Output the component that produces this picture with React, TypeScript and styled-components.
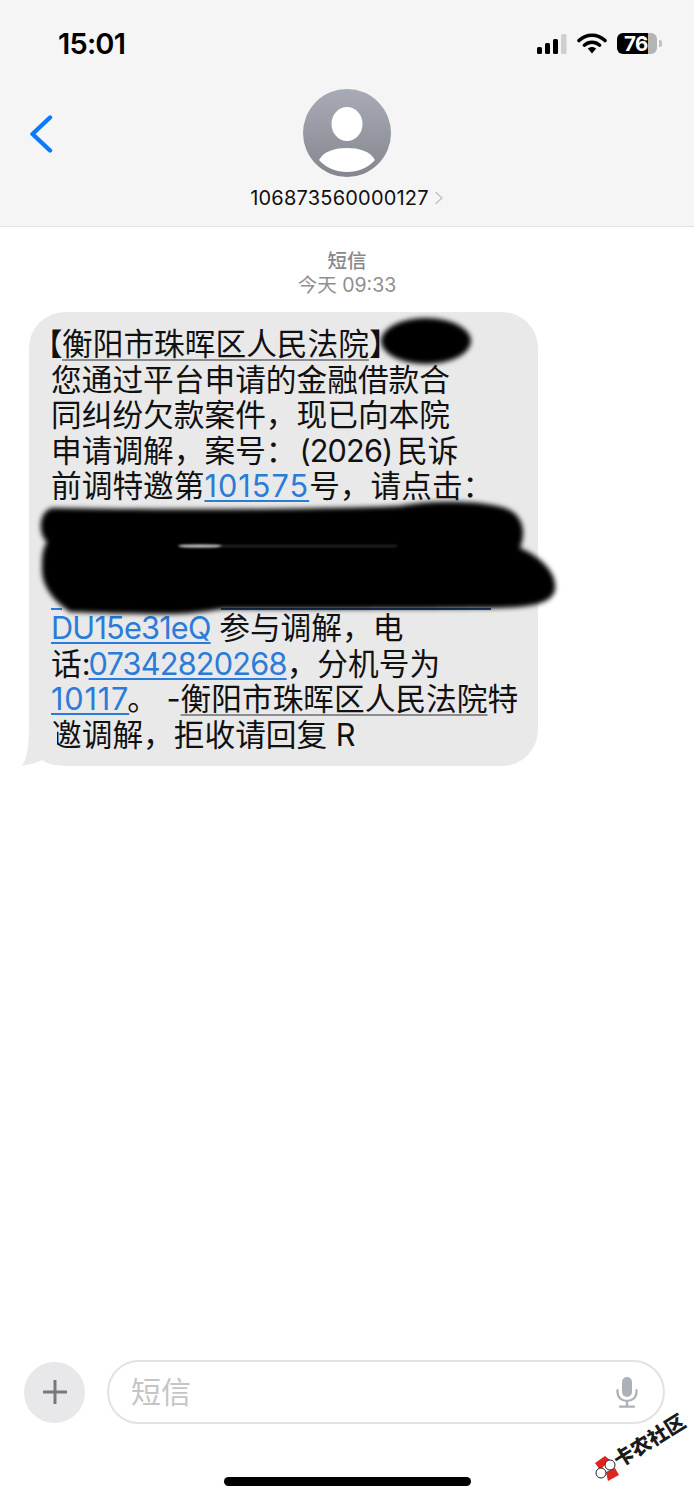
import React from "react";
import styled, { createGlobalStyle } from "styled-components";

const Global = createGlobalStyle`
  html, body { margin: 0; padding: 0; background: #fff; }
  body { font-family: Inter, "Noto Sans CJK SC", sans-serif; color: #000; }
  * { box-sizing: border-box; }
`;

const Page = styled.div`
  position: relative;
  width: 694px;
  height: 1500px;
  overflow: hidden;
  display: flex;
  flex-direction: column;
  background: #fff;
`;

const Header = styled.header`
  height: 227px;
  flex: none;
  background: #f5f5f6;
  border-bottom: 1px solid #e2e2e3;
  display: flex;
  flex-direction: column;
`;

const StatusBar = styled.div`
  height: 89px;
  flex: none;
  padding: 30px 32px 0 58px;
  display: flex;
  justify-content: space-between;
  align-items: flex-start;
`;

const Clock = styled.div`
  font-family: Inter, sans-serif;
  font-size: 29px;
  line-height: 28px;
  font-weight: 600;
  letter-spacing: -0.8px;
`;

const StatusIcons = styled.div`
  display: flex;
  align-items: center;
  gap: 10px;
  margin-top: 3px;
`;

const Battery = styled.div`
  width: 45px;
  height: 21px;
  display: flex;
  align-items: center;
  justify-content: center;
`;

const BatteryBody = styled.div`
  width: 40px;
  height: 21px;
  border-radius: 6px;
  background: linear-gradient(90deg, #000 0 78%, #b4b4b5 78% 100%);
  color: #fff;
  font: 700 20.5px/21px Inter, sans-serif;
  letter-spacing: -0.5px;
  padding-left: 7px;
`;

const BatteryNub = styled.div`
  width: 3px;
  height: 7px;
  margin-left: 2px;
  border-radius: 0 2px 2px 0;
  background: #c2c2c3;
`;

const Nav = styled.div`
  display: grid;
  grid-template-columns: 1fr auto 1fr;
`;

const BackSlot = styled.div`
  padding: 26px 0 0 29px;
`;

const Contact = styled.div`
  display: flex;
  flex-direction: column;
  align-items: center;
`;

const NameRow = styled.div`
  display: flex;
  align-items: center;
  gap: 5px;
  margin-top: 10px;
`;

const Name = styled.span`
  font: 400 20px/22px Inter, sans-serif;
  letter-spacing: 0.2px;
  color: #111;
`;

const Thread = styled.main`
  flex: 1;
  padding-top: 22px;
`;

const Meta = styled.div`
  text-align: center;
  color: #8e8e92;
  font-size: 19.5px;
  line-height: 24px;
`;

const MetaKind = styled.div`
  font-weight: 500;
  color: #88888c;
`;

const BubbleRow = styled.div`
  position: relative;
  margin: 15px 0 0 29px;
  width: 509px;
`;

const Bubble = styled.div`
  background: #e9e9ea;
  border-radius: 36px;
  padding: 14px 0 13px 22px;
  height: 454px;
`;

const Tail = styled.svg`
  position: absolute;
  left: -10px;
  bottom: 0;
`;

const Line = styled.div`
  height: 35.5px;
  font-size: 30.7px;
  line-height: 35.5px;
  white-space: nowrap;
  color: #111;
`;

const Bracket = styled.span`
  display: inline-block;
  width: 17px;
  margin-left: -6px;
  text-indent: -13px;
`;

const Detected = styled.span`
  text-decoration: underline;
  text-decoration-color: #8d8d90;
  text-decoration-thickness: 1.5px;
  text-underline-offset: 4px;
`;

const Link = styled.span<{ $spacing?: number; $pull?: number; $trail?: number }>`
  color: #2b7bd8;
  letter-spacing: ${(p) => p.$spacing ?? 0.8}px;
  margin-left: ${(p) => p.$pull ?? 0}px;
  margin-right: ${(p) => p.$trail ?? 0}px;
  text-decoration: underline;
  text-decoration-color: #2b7bd8;
  text-decoration-thickness: 2px;
  text-underline-offset: 3px;
`;

const Latin = styled.span`
  letter-spacing: -0.9px;
  margin-left: 3px;
  margin-right: -4px;
`;

const HiddenLink = styled.div`
  width: 440px;
  height: 100%;
  background:
    linear-gradient(#2b7bd8, #2b7bd8) 0 100% / 11px 2px no-repeat,
    linear-gradient(#1d4f8f, #1d4f8f) 170px 100% / 270px 2px no-repeat;
`;

const Redaction = styled.svg`
  position: absolute;
  left: 0;
  top: 300px;
  pointer-events: none;
`;

const Composer = styled.div`
  flex: none;
  display: flex;
  align-items: center;
  gap: 22px;
  padding: 0 29px 0 24px;
  height: 64px;
  margin-bottom: 76px;
`;

const PlusButton = styled.div`
  width: 61px;
  height: 61px;
  flex: none;
  border-radius: 50%;
  background: #e8e8ea;
  display: flex;
  align-items: center;
  justify-content: center;
`;

const Field = styled.div`
  flex: 1;
  height: 64px;
  border: 2px solid #e2e2e4;
  border-radius: 32px;
  display: flex;
  align-items: center;
  justify-content: space-between;
  padding: 0 25px 0 22px;
`;

const Placeholder = styled.span`
  color: #c5c5c7;
  font-size: 30px;
  line-height: 36px;
`;

const HomeBar = styled.div`
  position: absolute;
  left: 224px;
  top: 1477px;
  width: 247px;
  height: 9px;
  border-radius: 5px;
  background: #000;
`;

const Watermark = styled.div`
  position: absolute;
  left: 588px;
  top: 1404px;
  width: 104px;
  height: 82px;
`;

const WatermarkText = styled.span`
  position: absolute;
  left: 21px;
  top: 24px;
  font: 900 20px/24px "Noto Sans CJK SC", serif;
  color: #1b1b1b;
  white-space: nowrap;
  transform: rotate(-32deg);
`;

const WatermarkLogo = styled.svg`
  position: absolute;
  left: 5px;
  top: 51px;
`;

export default function App() {
  return (
    <Page>
      <Global />
      <Header>
        <StatusBar>
          <Clock>15:01</Clock>
          <StatusIcons>
            <svg width="30" height="20" viewBox="0 0 30 20">
              <rect x="0" y="13" width="5" height="7" rx="1.5" fill="#000" />
              <rect x="8" y="9" width="5" height="11" rx="1.5" fill="#000" />
              <rect x="16" y="5" width="5" height="15" rx="1.5" fill="#000" />
              <rect x="24" y="0" width="5.5" height="20" rx="1.5" fill="#cfcfd0" />
            </svg>
            <svg width="30" height="21" viewBox="0 0 30 21">
              <path d="M2 7.5C9.5 0.5 20.5 0.5 28 7.5" fill="none" stroke="#000" strokeWidth="3.6" strokeLinecap="round" />
              <path d="M7.3 12.2C11.8 8.2 18.2 8.2 22.7 12.2" fill="none" stroke="#000" strokeWidth="3.4" strokeLinecap="round" />
              <path d="M10.8 15.6C13.2 13.3 16.8 13.3 19.2 15.6L15 20.5Z" fill="#000" />
            </svg>
            <Battery>
              <BatteryBody>76</BatteryBody>
              <BatteryNub />
            </Battery>
          </StatusIcons>
        </StatusBar>
        <Nav>
          <BackSlot>
            <svg width="24" height="38" viewBox="0 0 24 38">
              <path d="M21 2.5L3.5 19L21 35.5" fill="none" stroke="#0a7aff" strokeWidth="4.4" strokeLinecap="round" strokeLinejoin="round" />
            </svg>
          </BackSlot>
          <Contact>
            <svg width="88" height="88" viewBox="0 0 88 88">
              <defs>
                <linearGradient id="avatarFill" x1="0" y1="0" x2="0" y2="1">
                  <stop offset="0" stopColor="#a8abb6" />
                  <stop offset="1" stopColor="#85878f" />
                </linearGradient>
              </defs>
              <circle cx="44" cy="44" r="44" fill="url(#avatarFill)" />
              <ellipse cx="44" cy="35" rx="15.5" ry="17" fill="#fff" />
              <path d="M16 71C21 62 32 59 44 59C56 59 67 62 72 71C65 79 55 83 44 83C33 83 23 79 16 71Z" fill="#fff" />
            </svg>
            <NameRow>
              <Name>106873560000127</Name>
              <svg width="10" height="14" viewBox="0 0 10 14">
                <path d="M2 1.5L8 7L2 12.5" fill="none" stroke="#c4c4c6" strokeWidth="1.6" strokeLinecap="round" strokeLinejoin="round" />
              </svg>
            </NameRow>
          </Contact>
          <div />
        </Nav>
      </Header>

      <Thread>
        <Meta>
          <MetaKind>短信</MetaKind>
          <div>今天 09:33</div>
        </Meta>
        <BubbleRow>
          <Tail width="40" height="36" viewBox="0 0 40 36">
            <path d="M2 35.5C6 33 9 27 10 1L38 1L38 35.5C32 35 28 33 23 30C17 33 8 35.5 2 35.5Z" fill="#e9e9ea" />
          </Tail>
          <Bubble>
            <Line>
              <Bracket>【</Bracket>
              <Detected>衡阳市珠晖区人民法院</Detected>】
            </Line>
            <Line>您通过平台申请的金融借款合</Line>
            <Line>同纠纷欠款案件，现已向本院</Line>
            <Line>申请调解，案号：<Latin>(2026)</Latin> 民诉</Line>
            <Line>前调特邀第<Link $spacing={1}>101575</Link>号，请点击：</Line>
            <Line />
            <Line />
            <Line><HiddenLink /></Line>
            <Line><Link $spacing={-0.8}>DU15e31eQ</Link> 参与调解，电</Line>
            <Line>话:<Link $pull={-2} $spacing={-0.8}>07342820268</Link>，分机号为</Line>
            <Line><Link $trail={-2}>10117</Link>。 -<Detected>衡阳市珠晖区人民法院</Detected>特</Line>
            <Line>邀调解，拒收请回复 R</Line>
          </Bubble>
        </BubbleRow>
      </Thread>

      <Redaction width="694" height="330" viewBox="0 300 694 330">
        <defs>
          <filter id="soft" x="-10%" y="-30%" width="120%" height="160%">
            <feGaussianBlur stdDeviation="2.5" />
          </filter>
          <filter id="softer" x="-20%" y="-300%" width="140%" height="700%">
            <feGaussianBlur stdDeviation="1" />
          </filter>
        </defs>
        <g filter="url(#soft)" fill="#000">
          <ellipse cx="426" cy="341" rx="45" ry="23" />
          <path d="M52 508C150 510 300 510 400 506C430 500 480 500 505 508C522 514 527 530 520 548C535 554 558 570 555 590C552 604 530 607 500 608C440 609 300 609 222 609C200 613 180 614 170 614C130 614 100 613 70 612C52 600 42 585 42 570C42 558 42 550 47 542C38 534 38 512 52 508Z" />
        </g>
        <g filter="url(#softer)">
          <ellipse cx="200" cy="546" rx="22" ry="1.6" fill="#d0d0d0" />
          <rect x="222" y="545.5" width="175" height="1" fill="#555" />
        </g>
      </Redaction>

      <Composer>
        <PlusButton>
          <svg width="24" height="24" viewBox="0 0 24 24">
            <path d="M12 1V23M1 12H23" stroke="#77777c" strokeWidth="3" strokeLinecap="round" />
          </svg>
        </PlusButton>
        <Field>
          <Placeholder>短信</Placeholder>
          <svg width="22" height="31" viewBox="0 0 22 31">
            <rect x="6" y="0" width="10" height="20" rx="5" fill="#adb0b8" />
            <path d="M1.5 13V15C1.5 20.5 5.5 24 11 24C16.5 24 20.5 20.5 20.5 15V13" fill="none" stroke="#adb0b8" strokeWidth="2.2" strokeLinecap="round" />
            <path d="M11 24V29M4 29.6H18" stroke="#adb0b8" strokeWidth="2.4" strokeLinecap="round" />
          </svg>
        </Field>
      </Composer>

      <HomeBar />

      <Watermark>
        <WatermarkText>卡农社区</WatermarkText>
        <WatermarkLogo width="28" height="28" viewBox="0 0 28 28">
          <path d="M2 8L12 1L17 5L7 15Z" fill="#e0251f" />
          <path d="M13 17L22 13L26 20L15 26Z" fill="#e0251f" />
          <circle cx="17" cy="10" r="5" fill="#fff" stroke="#222" strokeWidth="1" />
          <circle cx="8" cy="18" r="5" fill="#fff" stroke="#222" strokeWidth="1" />
        </WatermarkLogo>
      </Watermark>
    </Page>
  );
}
